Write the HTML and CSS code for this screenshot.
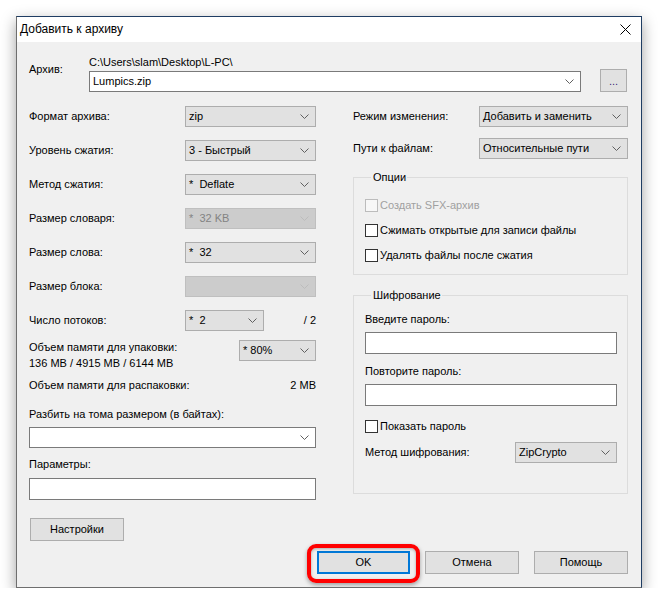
FILE: index.html
```html
<!DOCTYPE html>
<html lang="ru">
<head>
<meta charset="utf-8">
<title>Добавить к архиву</title>
<link rel="stylesheet" href="styles.css">
</head>
<body>
<div class="window">
  <div class="titlebar">
    <span class="title">Добавить к архиву</span>
    <svg class="close" width="11" height="11" viewBox="0 0 11 11"><path d="M0.5 0.5 L10.5 10.5 M10.5 0.5 L0.5 10.5" stroke="#000" stroke-width="1" fill="none"/></svg>
  </div>
  <div class="content">
    <div class="archive">
      <div class="archive-label">Архив:</div>
      <div class="archive-main">
        <div class="path">C:\Users\slam\Desktop\L-PC\</div>
        <div class="select edit">Lumpics.zip<svg class="chev" width="9" height="5" viewBox="0 0 9 5"><path d="M0.5 0.5 L4.5 4.5 L8.5 0.5"/></svg></div>
      </div>
      <div class="btn browse"><span class="dots">...</span></div>
    </div>

    <div class="columns">
      <div class="left">
        <div class="row"><div class="lbl">Формат архива:</div><div class="select w131">zip<svg class="chev" width="9" height="5" viewBox="0 0 9 5"><path d="M0.5 0.5 L4.5 4.5 L8.5 0.5"/></svg></div></div>
        <div class="row"><div class="lbl">Уровень сжатия:</div><div class="select w131">3 - Быстрый<svg class="chev" width="9" height="5" viewBox="0 0 9 5"><path d="M0.5 0.5 L4.5 4.5 L8.5 0.5"/></svg></div></div>
        <div class="row"><div class="lbl">Метод сжатия:</div><div class="select w131">*&nbsp; Deflate<svg class="chev" width="9" height="5" viewBox="0 0 9 5"><path d="M0.5 0.5 L4.5 4.5 L8.5 0.5"/></svg></div></div>
        <div class="row"><div class="lbl">Размер словаря:</div><div class="select w131 disabled">*&nbsp; 32 KB<svg class="chev" width="9" height="5" viewBox="0 0 9 5"><path d="M0.5 0.5 L4.5 4.5 L8.5 0.5"/></svg></div></div>
        <div class="row"><div class="lbl">Размер слова:</div><div class="select w131">*&nbsp; 32<svg class="chev" width="9" height="5" viewBox="0 0 9 5"><path d="M0.5 0.5 L4.5 4.5 L8.5 0.5"/></svg></div></div>
        <div class="row"><div class="lbl">Размер блока:</div><div class="select w131 disabled"><span></span><svg class="chev" width="9" height="5" viewBox="0 0 9 5"><path d="M0.5 0.5 L4.5 4.5 L8.5 0.5"/></svg></div></div>
        <div class="row threads"><div class="lbl">Число потоков:</div><div class="select w79">*&nbsp; 2<svg class="chev" width="9" height="5" viewBox="0 0 9 5"><path d="M0.5 0.5 L4.5 4.5 L8.5 0.5"/></svg></div><div class="grow right-text">/ 2</div></div>
        <div class="mem-row">
          <div class="mem-lbl">Объем памяти для упаковки:<br>136 MB / 4915 MB / 6144 MB</div>
          <div class="select w77 mem-sel">* 80%<svg class="chev" width="9" height="5" viewBox="0 0 9 5"><path d="M0.5 0.5 L4.5 4.5 L8.5 0.5"/></svg></div>
        </div>
        <div class="unpack-row"><span>Объем памяти для распаковки:</span><span>2 MB</span></div>
        <div class="text-lbl split-lbl">Разбить на тома размером (в байтах):</div>
        <div class="select edit full"><span></span><svg class="chev" width="9" height="5" viewBox="0 0 9 5"><path d="M0.5 0.5 L4.5 4.5 L8.5 0.5"/></svg></div>
        <div class="text-lbl params-lbl">Параметры:</div>
        <div class="input full params"></div>
        <div class="btn settings">Настройки</div>
      </div>

      <div class="right">
        <div class="rrow"><div class="rlbl">Режим изменения:</div><div class="select w149">Добавить и заменить<svg class="chev" width="9" height="5" viewBox="0 0 9 5"><path d="M0.5 0.5 L4.5 4.5 L8.5 0.5"/></svg></div></div>
        <div class="rrow"><div class="rlbl">Пути к файлам:</div><div class="select w149">Относительные пути<svg class="chev" width="9" height="5" viewBox="0 0 9 5"><path d="M0.5 0.5 L4.5 4.5 L8.5 0.5"/></svg></div></div>

        <fieldset class="group options">
          <legend>Опции</legend>
          <div class="check disabled"><span class="box"></span><span>Создать SFX-архив</span></div>
          <div class="check"><span class="box"></span><span>Сжимать открытые для записи файлы</span></div>
          <div class="check"><span class="box"></span><span>Удалять файлы после сжатия</span></div>
        </fieldset>

        <fieldset class="group crypt">
          <legend>Шифрование</legend>
          <div class="text-lbl pw1">Введите пароль:</div>
          <div class="input pw"></div>
          <div class="text-lbl pw2">Повторите пароль:</div>
          <div class="input pw"></div>
          <div class="check show"><span class="box"></span><span>Показать пароль</span></div>
          <div class="method"><div class="mlbl">Метод шифрования:</div><div class="select w102">ZipCrypto<svg class="chev" width="9" height="5" viewBox="0 0 9 5"><path d="M0.5 0.5 L4.5 4.5 L8.5 0.5"/></svg></div></div>
        </fieldset>
      </div>
    </div>

    <div class="footer">
      <div class="btn ok">OK<span class="highlight"></span></div>
      <div class="btn">Отмена</div>
      <div class="btn">Помощь</div>
    </div>
  </div>
</div>
</body>
</html>
```

FILE: styles.css
```css
* { box-sizing: border-box; }
html, body { margin: 0; }
body {
  background: #ffffff;
  padding: 16px 0 0 16px;
  font-family: "Liberation Sans", Arial, sans-serif;
  font-size: 11px;
  line-height: 15px;
  color: #000;
}
.window {
  width: 626px;
  height: 572px;
  display: flex;
  flex-direction: column;
  border: 1px solid #6e6e6e;
  border-top-color: #1f3d63;
  border-right-color: #1f3d63;
  box-shadow: 0 5px 14px rgba(0,0,0,0.38);
  background: #f0f0f0;
}
.titlebar {
  height: 25px;
  background: #ffffff;
  display: flex;
  align-items: center;
  justify-content: space-between;
  padding: 0 10px 0 3px;
}
.title { font-size: 12px; }
.close { display: block; }
.content {
  flex: 1;
  padding: 13px 13px 0 12px;
}
.archive { display: flex; align-items: flex-start; }
.archive-label { width: 60px; padding-top: 7px; }
.archive-main { width: 492px; }
.path { margin-bottom: 1px; }
.select {
  height: 21px;
  border: 1px solid #adadad;
  background: #e1e1e1;
  display: flex;
  align-items: center;
  justify-content: space-between;
  padding: 0 6px 0 3px;
  white-space: nowrap;
}
.select.edit { background: #ffffff; border-color: #7a7a7a; }
.select.disabled { background: #cccccc; border-color: #bfbfbf; color: #838383; }
.chev { display: block; flex: none; }
.chev path { fill: none; stroke: #606060; stroke-width: 1; }
.select.disabled .chev path { stroke: #bcbcbc; }
.btn {
  height: 23px;
  border: 1px solid #adadad;
  background: #e1e1e1;
  display: flex;
  align-items: center;
  justify-content: center;
}
.browse { width: 27px; margin: 14px 0 0 19px; }
.dots { color: #3d1f7a; font-size: 11px; line-height: 11px; padding-top: 2px; }

.columns { display: flex; margin-top: 14px; gap: 37px; }
.left { width: 287px; }
.right { width: 275px; }

.row { display: flex; align-items: center; height: 21px; margin-bottom: 13px; }
.row.threads { margin-bottom: 8px; }
.lbl { width: 156px; flex: none; }
.w131 { width: 131px; }
.w79 { width: 79px; }
.w77 { width: 77px; }
.w149 { width: 149px; }
.w102 { width: 102px; }
.grow { flex: 1; }
.right-text { text-align: right; }
.mem-row { display: flex; justify-content: space-between; align-items: flex-start; }
.mem-lbl { line-height: 16px; }
.mem-sel { margin-top: 1px; }
.unpack-row { display: flex; justify-content: space-between; margin-top: 7px; }
.split-lbl { margin-top: 14px; margin-bottom: 5px; }
.full { width: 287px; }
.params-lbl { margin-top: 9px; margin-bottom: 6px; }
.input { height: 22px; background: #ffffff; border: 1px solid #7a7a7a; }
.settings { width: 94px; margin: 18px 0 0 1px; }

.rrow { display: flex; align-items: center; height: 21px; margin-bottom: 11px; }
.rlbl { width: 126px; flex: none; }

.group {
  margin: 0;
  border: 1px solid #dcdcdc;
  padding: 0;
  min-width: 0;
}
.group legend {
  padding: 0 1px 0 2px;
  margin-left: 6px;
  line-height: 15px;
}
.options { margin-top: 3px; padding: 8px 0 6px 11px; }
.check { display: flex; align-items: center; height: 25px; }
.check .box {
  width: 13px; height: 13px;
  border: 1px solid #333333;
  background: #ffffff;
  margin-right: 2px;
  flex: none;
}
.check.disabled { color: #a0a0a0; }
.check.disabled .box { border-color: #bcbcbc; background: #f7f7f7; }

.crypt { margin-top: 13px; padding: 9px 10px 30px 11px; }
.pw { width: 252px; }
.pw2 { margin-top: 10px; margin-bottom: 5px; }
.pw1 { margin-bottom: 5px; }
.show { margin-top: 8px; }
.method { display: flex; align-items: center; height: 21px; margin-top: 3px; }
.mlbl { width: 150px; flex: none; }

.footer { display: flex; justify-content: flex-end; gap: 15px; margin-top: 10px; }
.footer .btn { width: 94px; }
.btn.ok { position: relative; border: 2px solid #0078d7; width: 93px; }
.highlight {
  position: absolute;
  left: -12px; right: -12px; top: -9px; bottom: -11px;
  border: 4px solid #ff0000;
  border-radius: 9px;
  box-shadow: 0 2px 4px rgba(0,0,0,0.35), inset 0 1px 3px rgba(0,0,0,0.3);
  pointer-events: none;
}
```
